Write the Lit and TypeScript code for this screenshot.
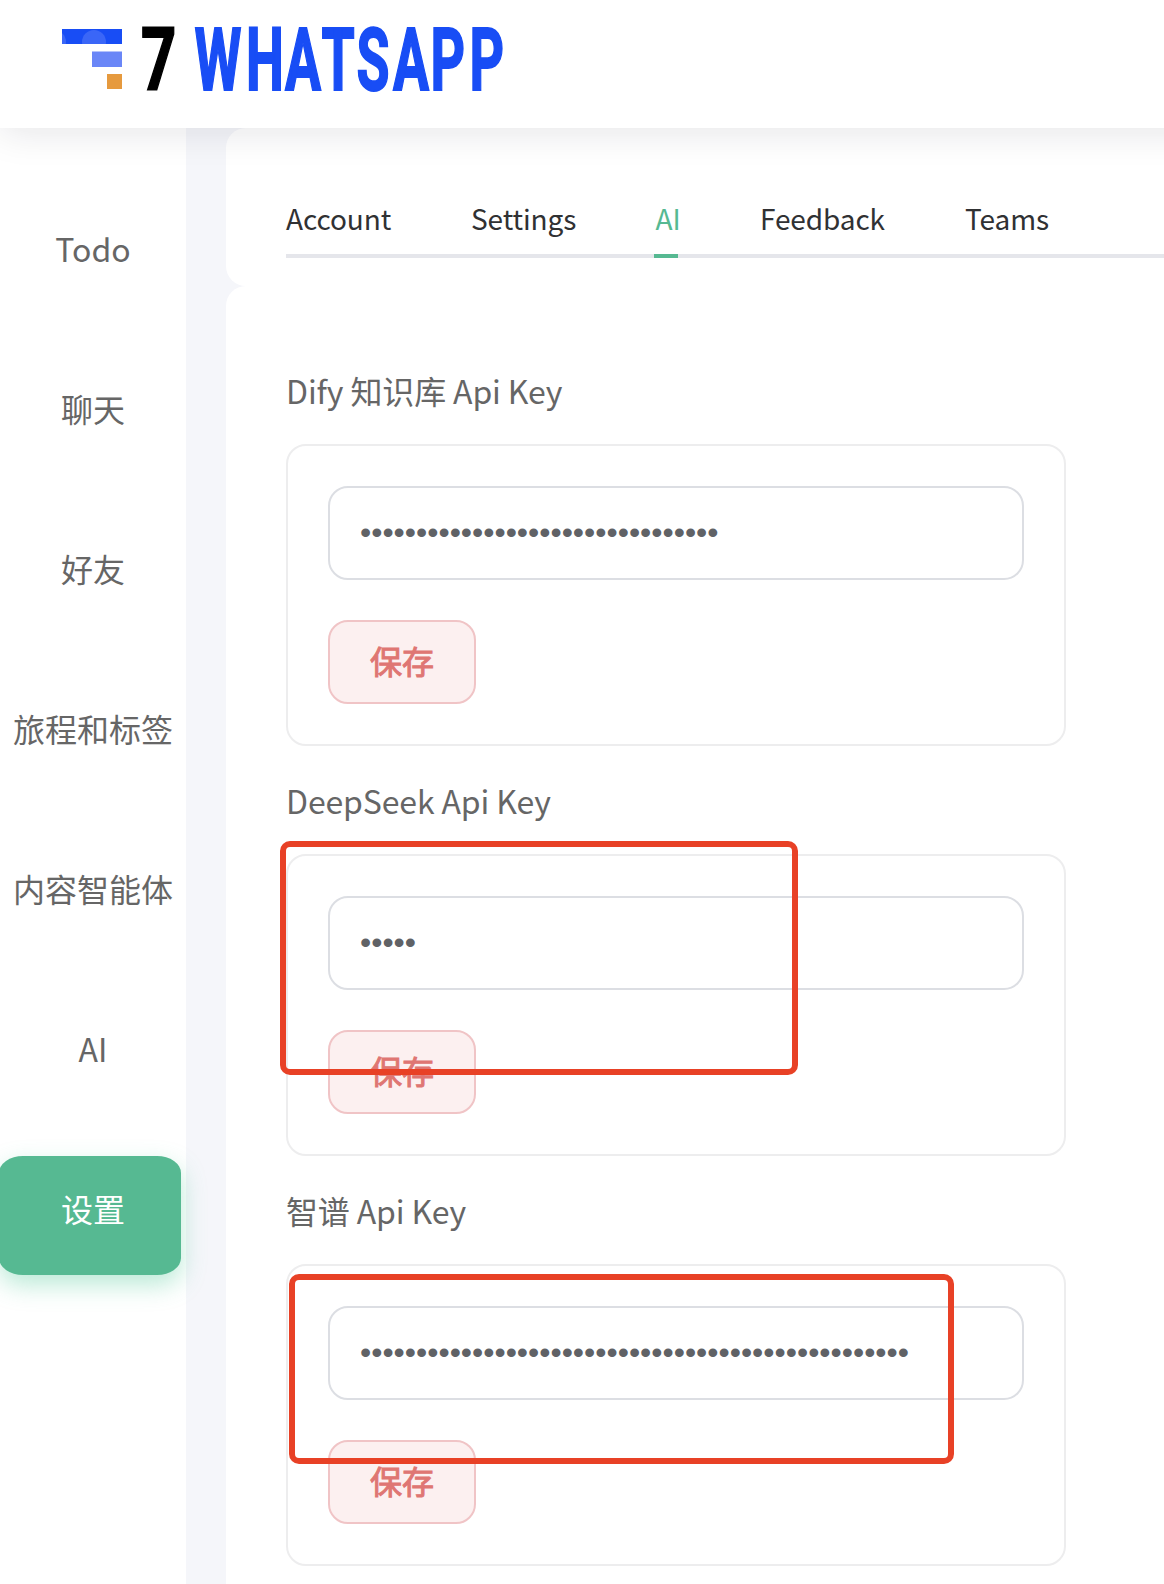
import { LitElement, html, css, svg } from "lit";
import { customElement, property } from "lit/decorators.js";
import { classMap } from "lit/directives/class-map.js";
import { styleMap } from "lit/directives/style-map.js";

@customElement("brand-logo")
class BrandLogo extends LitElement {
  static styles = css`
    :host { display: block; }
    .logo { display: block; }
    .word {
      font-family: Roboto, "Liberation Sans", sans-serif; font-weight: 700; font-size: 88px;
      stroke-width: 1.8px; stroke-linejoin: miter;
    }
    .blue { fill: #184df5; stroke: #184df5; }
    .black { fill: #000; stroke: #000; }
  `;
  // Horizontal squeeze that gives the wordmark its condensed look.
  private squeeze = 0.61;
  render() {
    const k = this.squeeze;
    const xs = [194.5, 246, 285, 321.5, 356.5, 393, 430.5, 469.5].map((x) => x / k).join(" ");
    return html`<svg class="logo" width="520" height="128" viewBox="0 0 520 128">
      ${svg`
      <defs><clipPath id="bar"><rect x="62" y="29" width="60" height="15"/></clipPath></defs>
      <rect x="62" y="29" width="60" height="15" fill="#184df5"/>
      <g clip-path="url(#bar)" fill="#3a66f7"><circle cx="94" cy="42" r="12"/><circle cx="54" cy="42" r="12"/></g>
      <rect x="92" y="51.5" width="30" height="15.5" fill="#6a86f7"/>
      <rect x="107" y="74" width="15" height="15" fill="#e69a3e"/>
      <text class="word black" transform="translate(141 89.6) scale(0.7 1)">7</text>
      <text class="word blue" transform="scale(${k} 1)" x="${xs}" y="89.6">WHATSAPP</text>`}
    </svg>`;
  }
}

@customElement("key-card")
class KeyCard extends LitElement {
  static styles = css`
    :host { display: block; height: 410px; }
    .label { height: 108px; line-height: 108px; font-size: 32px; letter-spacing: -0.13px; color: #666; white-space: pre; }
    .card {
      box-sizing: border-box; width: 780px; height: 302px; padding: 40px;
      border: 2px solid #ededee; border-radius: 20px;
      display: flex; flex-direction: column; align-items: flex-start; gap: 40px;
    }
    .field {
      box-sizing: border-box; width: 696px; height: 94px; margin: 0; padding: 0 30px 1px;
      border: 2px solid #dcdee3; border-radius: 20px; outline: none; background: #fff;
      color: #606266; font: 32px "Liberation Sans", Arial, sans-serif;
    }
    .save {
      box-sizing: border-box; width: 148px; height: 84px; margin: 0; padding: 0 0 4px;
      border: 2px solid #f0c4c6; border-radius: 20px; background: #fcf0f0; color: #df7673;
      font: 400 32px/76px "Noto Sans CJK SC", sans-serif; -webkit-text-stroke: 1px #df7673;
    }
  `;
  @property() label = "";
  @property({ type: Number }) size = 0;
  render() {
    return html`
      <div class="label">${this.label}</div>
      <div class="card">
        <input class="field" type="password" .value=${"x".repeat(this.size)} />
        <button class="save">保存</button>
      </div>`;
  }
}

@customElement("app-root")
class AppRoot extends LitElement {
  static styles = css`
    :host {
      display: block; position: relative; width: 1164px; height: 1584px; overflow: hidden;
      background: #f5f6fa; font-family: "Noto Sans CJK SC", sans-serif;
    }
    .header {
      position: relative; z-index: 2; height: 128px; margin-right: -60px; background: #fff;
      box-shadow: 0 4px 36px rgba(20, 20, 40, 0.11);
    }
    .body { display: flex; gap: 40px; height: 1456px; }
    .nav {
      box-sizing: border-box; width: 186px; flex: none; padding-top: 68px; background: #fff;
      display: flex; flex-direction: column; gap: 41px;
    }
    .item {
      box-sizing: border-box; flex: none; height: 119px; margin: 0 5px 0 -1px; padding: 0 0 16px 6px;
      display: flex; align-items: center; justify-content: center;
      font-size: 32px; color: #666; white-space: nowrap;
    }
    .active {
      color: #fff; background: #56b992; border-radius: 24px / 17px;
      box-shadow: 0 10px 24px rgba(75, 200, 150, 0.38);
    }
    .main { flex: 1; min-width: 0; }
    .tabs-panel { box-sizing: border-box; height: 158px; padding: 52px 0 0 60px; border-radius: 20px 0 0 20px; background: #fff; }
    .tabs { box-sizing: border-box; height: 78px; display: flex; gap: 80px; border-bottom: 4px solid #e5e6eb; }
    .tab {
      box-sizing: border-box; flex: none; height: 78px; line-height: 76px;
      font-size: 28px; letter-spacing: -0.1px; white-space: nowrap; color: #303133;
    }
    .current { color: #56b992; border-bottom: 4px solid #56b992; text-indent: 1.5px; }
    .keys { box-sizing: border-box; height: 1298px; padding: 50px 0 0 60px; border-radius: 20px 0 0 0; background: #fff; }
    .mark { position: absolute; z-index: 3; box-sizing: border-box; border: 6px solid #e84126; border-radius: 10px; pointer-events: none; }
    .mark-a { left: 280px; top: 841px; width: 518px; height: 234px; }
    .mark-b { left: 289px; top: 1274px; width: 665px; height: 190px; }
  `;
  private nav = ["Todo", "聊天", "好友", "旅程和标签", "内容智能体", "AI", "设置"];
  private tabs = [
    { name: "Account", width: 105, inset: 0 },
    { name: "Settings", width: 103, inset: 0 },
    { name: "AI", width: 24, inset: 0 },
    { name: "Feedback", width: 127, inset: 2 },
    { name: "Teams", width: 85, inset: 0 },
  ];
  private keys = [
    { label: "Dify 知识库 Api Key", size: 32 },
    { label: "DeepSeek Api Key", size: 5 },
    { label: "智谱 Api Key", size: 49 },
  ];
  render() {
    return html`
      <header class="header"><brand-logo></brand-logo></header>
      <div class="body">
        <nav class="nav">
          ${this.nav.map((n) => html`<div class=${classMap({ item: true, active: n === "设置" })}>${n}</div>`)}
        </nav>
        <main class="main">
          <section class="tabs-panel">
            <div class="tabs">
              ${this.tabs.map((t) => html`<div class=${classMap({ tab: true, current: t.name === "AI" })}
                style=${styleMap({ width: `${t.width}px`, paddingLeft: `${t.inset}px` })}>${t.name}</div>`)}
            </div>
          </section>
          <section class="keys">
            ${this.keys.map((k) => html`<key-card .label=${k.label} .size=${k.size}></key-card>`)}
          </section>
        </main>
      </div>
      <div class="mark mark-a"></div>
      <div class="mark mark-b"></div>`;
  }
}
